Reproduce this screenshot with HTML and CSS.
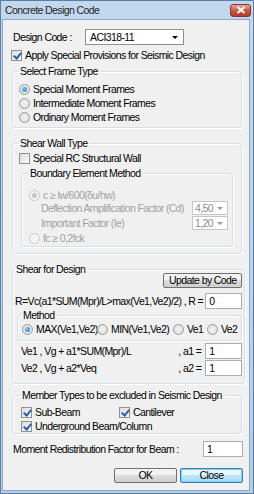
FILE: index.html
```html
<!DOCTYPE html>
<html lang="en">
<head>
  <meta charset="UTF-8">
  <title>Concrete Design Code</title>
  <link rel="stylesheet" href="styles.css">
</head>
<body>
  <div class="window">
    <div class="titlebar">
      <span class="title">Concrete Design Code</span>
      <span class="close-x">
        <svg width="10" height="8" viewBox="0 0 10 8"><path d="M1.5 1 L8.5 7 M8.5 1 L1.5 7" stroke="#fff" stroke-width="2"/></svg>
      </span>
    </div>
    <div class="client">
      <div class="row code-row">
        <span class="lbl">Design Code :</span>
        <span class="combo wide">ACI318-11<i class="arrow"></i></span>
      </div>
      <div class="row chk-row"><span class="chk on"></span>Apply Special Provisions for Seismic Design</div>

      <fieldset class="group g-frame">
        <legend>Select Frame Type</legend>
        <div class="row"><span class="radio on"></span>Special Moment Frames</div>
        <div class="row"><span class="radio"></span>Intermediate Moment Frames</div>
        <div class="row"><span class="radio"></span>Ordinary Moment Frames</div>
      </fieldset>

      <fieldset class="group g-wall">
        <legend>Shear Wall Type</legend>
        <div class="row"><span class="chk"></span>Special RC Structural Wall</div>
        <fieldset class="group g-boundary">
          <legend>Boundary Element Method</legend>
          <div class="off">
            <div class="row r-c"><span class="radio on dis"></span>c &ge; lw/600(&delta;u/hw)</div>
            <div class="row factor"><span class="flbl">Deflection Amplification Factor (Cd)</span><span class="combo small">4,50<i class="arrow"></i></span></div>
            <div class="row factor"><span class="flbl">Important Factor (Ie)</span><span class="combo small">1,20<i class="arrow"></i></span></div>
            <div class="row r-fc"><span class="radio dis"></span>fc &ge; 0,2fck</div>
          </div>
        </fieldset>
      </fieldset>

      <fieldset class="group g-shear">
        <legend>Shear for Design</legend>
        <div class="btn-line"><button class="btn update">Update by Code</button></div>
        <div class="row eq"><span class="eq-text">R=Vc(a1*SUM(Mpr)/L&gt;max(Ve1,Ve2)/2) , R =</span><span class="field">0</span></div>
        <fieldset class="group g-method">
          <legend>Method</legend>
          <div class="row methods">
            <span class="m m1"><span class="radio on"></span>MAX(Ve1,Ve2)</span>
            <span class="m m2"><span class="radio"></span>MIN(Ve1,Ve2)</span>
            <span class="m m3"><span class="radio"></span>Ve1</span>
            <span class="m"><span class="radio"></span>Ve2</span>
          </div>
        </fieldset>
        <div class="row eq ve"><span class="eq-text">Ve1 , Vg + a1*SUM(Mpr)/L</span><span class="suffix">, a1 =</span><span class="field">1</span></div>
        <div class="row eq ve"><span class="eq-text">Ve2 , Vg + a2*Veq</span><span class="suffix">, a2 =</span><span class="field">1</span></div>
      </fieldset>

      <fieldset class="group g-member">
        <legend>Member Types to be excluded in Seismic Design</legend>
        <div class="row two">
          <span class="col"><span class="chk on"></span>Sub-Beam</span>
          <span class="col"><span class="chk on"></span>Cantilever</span>
        </div>
        <div class="row"><span class="chk on"></span>Underground Beam/Column</div>
      </fieldset>

      <div class="row eq redist"><span class="eq-text">Moment Redistribution Factor for Beam :</span><span class="field">1</span></div>

      <div class="buttons">
        <button class="btn">OK</button>
        <button class="btn default">Close</button>
      </div>
    </div>
  </div>
</body>
</html>
```

FILE: styles.css
```css
html, body {
  margin: 0;
  padding: 0;
  background: #fff;
}
body {
  font-family: 'Liberation Sans', Arial, sans-serif;
  font-size: 10.5px;
  letter-spacing: -0.6px;
  color: #000;
}
.window {
  width: 254px;
  height: 494px;
  box-sizing: border-box;
  border: 1px solid #5d7ea3;
  background: linear-gradient(to bottom, #c2d8ef, #b4cde8);
  display: flex;
  flex-direction: column;
  overflow: hidden;
}
.titlebar {
  height: 18px;
  flex: none;
  display: flex;
  align-items: center;
  justify-content: space-between;
  padding: 0 2px 0 4px;
}
.title {
  color: #1e1e1e;
}
.close-x {
  width: 21px;
  height: 13px;
  border: 1px solid #7a3a32;
  border-radius: 3px;
  background: linear-gradient(to bottom, #e8a89a, #c75a46 50%, #b83a26);
  display: flex;
  align-items: center;
  justify-content: center;
  box-sizing: border-box;
}
.close-x svg { display: block; }
.client {
  flex: 1;
  margin: 0 3px 2px 1px;
  border: 1px solid #8fa8c4;
  background: #f0f0f0;
  padding: 0 6px 0 8px;
}
.row {
  height: 14px;
  line-height: 14px;
  display: flex;
  align-items: center;
  white-space: nowrap;
}
.code-row {
  height: 16px;
  margin-top: 9px;
}
.code-row .lbl {
  width: 72px;
  padding-left: 2px;
}
.combo {
  position: relative;
  display: inline-block;
  box-sizing: border-box;
  height: 16px;
  line-height: 14px;
  background: #fff;
  border: 1px solid #8e8f8f;
  padding-left: 4px;
}
.combo.wide { width: 99px; }
.arrow {
  position: absolute;
  right: 5px;
  top: 6px;
  width: 0;
  height: 0;
  border-left: 3px solid transparent;
  border-right: 3px solid transparent;
  border-top: 3px solid #000;
}
.chk-row {
  margin-top: 3px;
}
.chk {
  display: inline-block;
  width: 11px;
  height: 11px;
  box-sizing: border-box;
  border: 1px solid #8e8f8f;
  background: linear-gradient(135deg, #dcdcdc, #fbfbfb);
  margin-right: 3px;
  position: relative;
  flex: none;
}
.chk.on::after {
  content: "";
  position: absolute;
  left: 3px;
  top: 0px;
  width: 3px;
  height: 6px;
  border: solid #2a5ea8;
  border-width: 0 2px 2px 0;
  transform: rotate(40deg);
}
.radio {
  display: inline-block;
  width: 11px;
  height: 11px;
  box-sizing: border-box;
  border-radius: 50%;
  border: 1px solid #9a9a9a;
  background: radial-gradient(circle, #f4f4f4, #d8d8d8);
  margin-right: 3px;
  position: relative;
  flex: none;
}
.radio.on::after {
  content: "";
  position: absolute;
  left: 2px;
  top: 2px;
  width: 5px;
  height: 5px;
  border-radius: 50%;
  background: radial-gradient(circle at 40% 40%, #7ad0f5, #1a6fb5);
}
.radio.dis {
  border-color: #c8c8c8;
  background: #f4f4f4;
}
.radio.on.dis::after {
  background: #c4c4c4;
}
.group {
  margin: 0;
  border: 1px solid #d5dfe5;
  border-radius: 3px;
  box-shadow: inset 1px 1px #fff, 1px 1px #fff;
  padding: 0 4px 3px 6px;
}
.group legend {
  padding: 0 2px;
  margin-left: -1px;
  line-height: 14px;
  white-space: nowrap;
}
.g-frame {
  margin: 2px 1px 0 1px;
  padding-top: 4px;
}
.g-wall {
  margin: 8px 1px 0 1px;
  padding-top: 1px;
  padding-bottom: 6px;
}
.g-boundary {
  margin: 1px 4px 0 2px;
  padding: 8px 4px 1px 7px;
}
.off {
  color: #a0a0a0;
}
.r-c { margin-bottom: -2px; }
.factor {
  height: 15px;
  justify-content: space-between;
}
.flbl { padding-left: 12px; }
.combo.small {
  width: 36px;
  height: 14px;
  line-height: 12px;
  padding-left: 2px;
  color: #8a8a8a;
  border-color: #c6c6c6;
}
.combo.small .arrow {
  top: 5px;
  right: 4px;
  border-top-color: #9a9a9a;
}
.r-fc { margin-top: 1px; }
.g-shear {
  margin: 8px 1px 0 1px;
  padding: 0 2px 7px 2px;
}
.btn-line {
  display: flex;
  justify-content: flex-end;
  margin-top: -3px;
}
.btn {
  font-family: inherit;
  font-size: inherit;
  letter-spacing: inherit;
  white-space: nowrap;
  height: 15px;
  line-height: 11px;
  padding: 0;
  border: 1px solid #707070;
  border-radius: 2px;
  background: linear-gradient(to bottom, #f2f2f2 50%, #dddddd 50%, #cfcfcf);
  color: #000;
}
.update {
  width: 79px;
}
.eq {
  height: 16px;
  justify-content: space-between;
}
.g-shear > .eq { margin-top: 5px; }
.field {
  display: inline-block;
  box-sizing: border-box;
  width: 37px;
  height: 16px;
  line-height: 14px;
  background: #fff;
  border: 1px solid #abadb3;
  padding-left: 3px;
}
.g-method {
  margin: -1px 0 0 2px;
  padding: 0 4px 4px 4px;
}
.methods .m {
  display: inline-flex;
  align-items: center;
}
.m1 { width: 75px; }
.m2 { width: 76px; }
.m3 { width: 34px; }
.g-shear > .ve { margin-top: 1px; }
.g-shear > .ve:nth-last-child(2) { margin-top: 2px; }
.ve .eq-text {
  flex: 1;
  padding-left: 6px;
}
.ve .suffix { width: 27px; }
.g-member {
  margin: 4px 1px 0 1px;
  padding: 3px 4px 0 8px;
}
.two .col {
  display: inline-flex;
  align-items: center;
  width: 98px;
}
.redist {
  margin-top: 7px;
  padding-left: 2px;
}
.redist .field { width: 40px; }
.buttons {
  display: flex;
  justify-content: flex-end;
  gap: 3px;
  margin-top: 11px;
}
.buttons .btn { width: 63px; }
.btn.default {
  border-color: #3c7fb1;
  box-shadow: inset 0 0 0 1px #7ecef4;
  background: linear-gradient(to bottom, #eaf6fd 50%, #bee6fd 50%, #a7d9f5);
}
```
